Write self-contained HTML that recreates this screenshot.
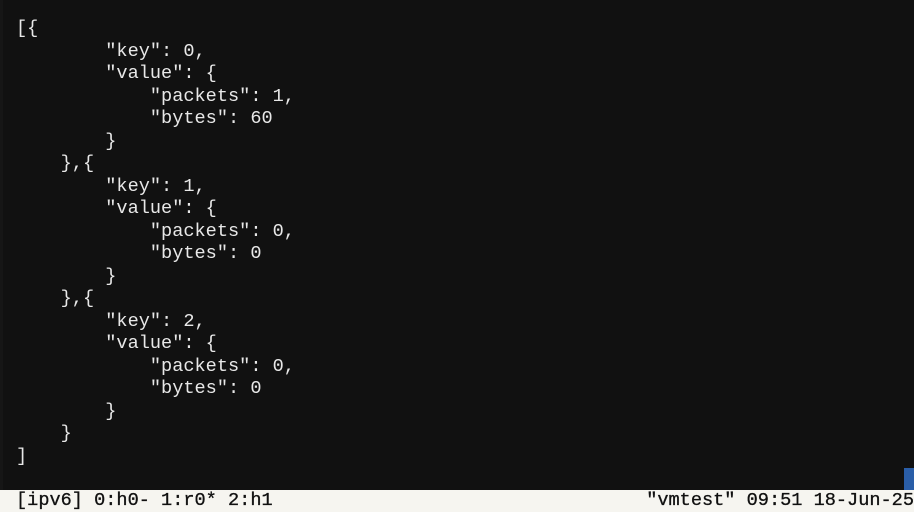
<!DOCTYPE html>
<html><head><style>
html,body{margin:0;padding:0;}
body{width:914px;height:512px;background:#111111;overflow:hidden;position:relative;font-family:"Liberation Mono","DejaVu Sans Mono",monospace;font-size:18.6px;color:#e8e8e8;}
pre{margin:0;font:inherit;position:absolute;left:16px;top:18px;line-height:22.5px;white-space:pre;}
.bar{position:absolute;left:0;top:490px;width:914px;height:22px;background:#f6f5f0;color:#111;line-height:22px;-webkit-text-stroke:0.3px #111;}
.bar .l{position:absolute;left:16px;top:0;white-space:pre;}
.bar .r{position:absolute;right:0;top:0;white-space:pre;}
.blk{position:absolute;left:904px;top:468px;width:10px;height:22px;background:#2a5ea8;}
.edge{position:absolute;left:0;top:0;width:3px;height:490px;background:#161616;}
</style></head><body>
<div class="edge"></div>
<pre>[{
        "key": 0,
        "value": {
            "packets": 1,
            "bytes": 60
        }
    },{
        "key": 1,
        "value": {
            "packets": 0,
            "bytes": 0
        }
    },{
        "key": 2,
        "value": {
            "packets": 0,
            "bytes": 0
        }
    }
]</pre>
<div class="blk"></div>
<div class="bar"><span class="l">[ipv6] 0:h0- 1:r0* 2:h1</span><span class="r">"vmtest" 09:51 18-Jun-25</span></div>
</body></html>
